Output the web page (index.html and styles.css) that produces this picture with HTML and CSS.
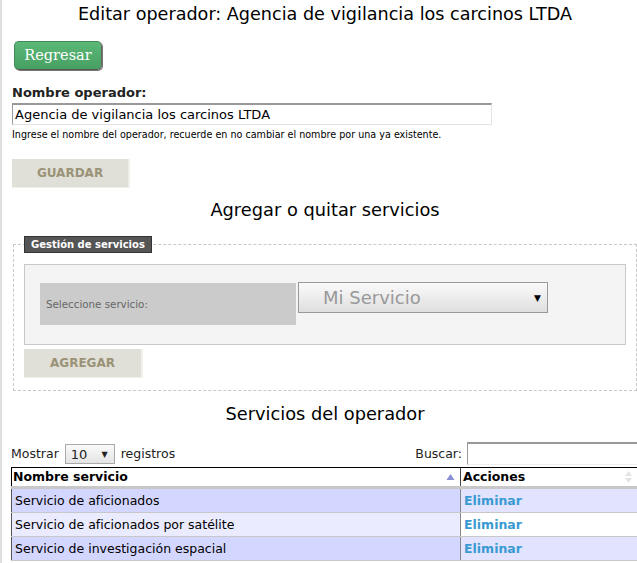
FILE: index.html
```html
<!DOCTYPE html>
<html lang="es">
<head>
<meta charset="utf-8">
<title>Editar operador</title>
<link rel="stylesheet" href="styles.css">
</head>
<body>
<div class="page">
  <h1 class="title">Editar operador: Agencia de vigilancia los carcinos LTDA</h1>
  <div class="back-row"><a class="btn-back" href="#">Regresar</a></div>
  <form class="op-form">
    <label class="field-label">Nombre operador:</label>
    <div class="name-input">Agencia de vigilancia los carcinos LTDA</div>
    <p class="help">Ingrese el nombre del operador, recuerde en no cambiar el nombre por una ya existente.</p>
    <div class="btn-row"><span class="btn-flat">GUARDAR</span></div>
  </form>

  <h2 class="subtitle">Agregar o quitar servicios</h2>
  <fieldset class="services-box">
    <legend class="legend">Gestión de servicios</legend>
    <div class="panel">
      <div class="panel-label">Seleccione servicio:</div>
      <div class="big-select"><span class="big-select-text">Mi Servicio</span><span class="arrow">&#9660;</span></div>
    </div>
    <div class="btn-row2"><span class="btn-flat btn-add">AGREGAR</span></div>
  </fieldset>

  <h2 class="subtitle subtitle2">Servicios del operador</h2>
  <div class="dt-top">
    <div class="dt-length">Mostrar <span class="mini-select">10 <span class="mini-arrow">&#9660;</span></span> registros</div>
    <div class="dt-filter">Buscar: <span class="search-box"></span></div>
  </div>
  <table class="dt">
    <thead>
      <tr>
        <th class="c1"><div class="th-in">Nombre servicio<svg class="sort" width="9" height="8" viewBox="0 0 9 8"><path d="M0.5 7 L4.5 1 L8.5 7 Z" fill="#8a8fd6"/></svg></div></th>
        <th class="c2"><div class="th-in">Acciones<svg class="sort" width="9" height="16" viewBox="0 0 9 16"><path d="M1 7 L4.5 2 L8 7 Z M1 9 L4.5 14 L8 9 Z" fill="#e4e4e4"/></svg></div></th>
      </tr>
    </thead>
    <tbody>
      <tr class="odd"><td class="c1">Servicio de aficionados</td><td class="c2"><a href="#">Eliminar</a></td></tr>
      <tr class="even"><td class="c1">Servicio de aficionados por satélite</td><td class="c2"><a href="#">Eliminar</a></td></tr>
      <tr class="odd"><td class="c1">Servicio de investigación espacial</td><td class="c2"><a href="#">Eliminar</a></td></tr>
    </tbody>
  </table>
</div>
</body>
</html>
```
FILE: styles.css
```css
html, body { margin: 0; padding: 0; }
body {
  background: #fff;
  font-family: "DejaVu Sans", Verdana, sans-serif;
  color: #000;
  overflow: hidden;
  width: 637px;
  height: 563px;
}
.page {
  border-left: 2px solid #dedede;
  padding-left: 9px;
  width: 628px;
  min-height: 563px;
}
.title {
  margin: 0;
  padding-top: 3px;
  font-size: 17.6px;
  font-weight: normal;
  line-height: 22px;
  text-align: center;
}
.back-row { padding-top: 16px; padding-left: 3px; }
.btn-back {
  display: inline-block;
  width: 86px;
  height: 27px;
  line-height: 26px;
  text-align: center;
  font-family: "DejaVu Serif", "Liberation Serif", serif;
  font-size: 14.5px;
  color: #fff;
  text-decoration: none;
  background: linear-gradient(#5cb877, #45a062);
  border: 1px solid #3f8a56;
  border-bottom-color: #555;
  border-right-color: #666;
  border-radius: 5px;
  box-shadow: 1px 1px 0 #777;
}
.op-form { margin: 0; padding-top: 15px; padding-left: 1px; }
.field-label {
  display: block;
  font-size: 13px;
  font-weight: bold;
  line-height: 16px;
  color: #222;
}
.name-input {
  margin-top: 2px;
  width: 476px;
  height: 19px;
  line-height: 19px;
  padding-left: 2px;
  font-size: 13px;
  border: 1px solid #e3e3e3;
  border-top: 2px solid #999;
  border-left: 1px solid #999;
}
.help {
  margin: 3px 0 0;
  font-size: 9.6px;
  line-height: 14px;
}
.btn-row { padding-top: 17px; }
.btn-flat {
  display: inline-block;
  width: 116px;
  height: 28px;
  line-height: 28px;
  text-align: center;
  background: #e1e0d8;
  color: #9a9377;
  font-weight: bold;
  font-size: 12px;
  border-right: 2px solid #f0efe9;
  border-bottom: 1px solid #f0efe9;
}
.subtitle {
  margin: 0;
  padding-top: 11px;
  font-size: 17.8px;
  font-weight: normal;
  line-height: 22px;
  text-align: center;
}
.services-box {
  margin: 15px 0 0 2px;
  padding: 11px 10px 12px 10px;
  border: 1px dashed #c8c8c8;
  min-width: 0;
  width: 602px;
}
.legend {
  padding: 0 6px;
  margin-left: 0;
  background: #555;
  color: #fff;
  font-weight: bold;
  font-size: 10px;
  line-height: 15px;
  border: 1px solid #333;
}
.panel {
  margin-top: 0;
  display: flex;
  align-items: flex-start;
  gap: 2px;
  background: #f4f4f4;
  border: 1px solid #c8c8c8;
  padding: 18px 15px 19px 15px;
}
.panel-label {
  width: 250px;
  height: 42px;
  line-height: 42px;
  padding-left: 6px;
  background: #cbcbcb;
  color: #666;
  font-size: 10.3px;
}
.big-select {
  margin-top: -1px;
  border: 1px solid #999;
  background: linear-gradient(#fafafa, #dfdfdf);
  display: flex;
  align-items: center;
  justify-content: space-between;
  padding: 0 6px 0 24px;
  box-sizing: border-box;
  width: 250px;
  height: 31px;
}
.big-select-text { color: #999; font-size: 18px; }
.arrow { font-size: 9px; color: #000; }
.btn-row2 { padding-top: 4px; }
.btn-add { width: 117px; }
.subtitle2 { padding-top: 12px; }
.dt-top {
  margin-top: 17px;
  display: flex;
  justify-content: space-between;
  align-items: center;
  font-size: 12.5px;
  color: #222;
}
.mini-select {
  display: inline-block;
  width: 50px;
  height: 20px;
  line-height: 19px;
  box-sizing: border-box;
  border: 1px solid #aaa;
  background: linear-gradient(#fafafa, #e4e4e4);
  padding-left: 5px;
  margin: 0 2px 0 2px;
  font-size: 13px;
  vertical-align: middle;
}
.mini-arrow { font-size: 8px; margin-left: 10px; vertical-align: 2px; }
.dt-filter { display: flex; align-items: center; gap: 5px; }
.search-box {
  display: inline-block;
  width: 172px;
  height: 20px;
  border: 1px solid #eee;
  border-top: 2px solid #999;
  border-left: 1px solid #999;
  margin-right: -2px;
}
.dt {
  margin-top: 2px;
  width: 628px;
  border-collapse: collapse;
  font-size: 12px;
}
.dt th {
  text-align: left;
  font-weight: bold;
  font-size: 12.5px;
  padding: 0;
  height: 18px;
  border-top: 1px solid #000;
  border-bottom: 3px solid #c8c8c8;
}
.dt th.c1 { border-left: 1px solid #000; width: 448px; }
.dt th.c2 { border-left: 1px solid #444; }
.th-in {
  display: flex;
  justify-content: space-between;
  align-items: center;
  padding: 0 3px 0 1px;
  line-height: 18px;
}
.th-in .sort { margin-right: 2px; }
.dt th.c2 .th-in { padding-right: 4px; padding-left: 2px; }
.dt td {
  height: 23px;
  padding: 0 0 0 3px;
  border-bottom: 1px solid #c8c8c8;
  font-size: 12.5px;
}
.dt td.c1 { border-left: 1px solid #555; }
.dt td.c2 { border-left: 1px solid #888; }
.dt tr.odd td.c1 { background: #d3d6ff; }
.dt tr.odd td.c2 { background: #e2e4ff; }
.dt tr.even td.c1 { background: #eaebff; }
.dt tr.even td.c2 { background: #fff; }
.dt a {
  color: #3a9ad2;
  font-weight: bold;
  text-decoration: none;
}
```
